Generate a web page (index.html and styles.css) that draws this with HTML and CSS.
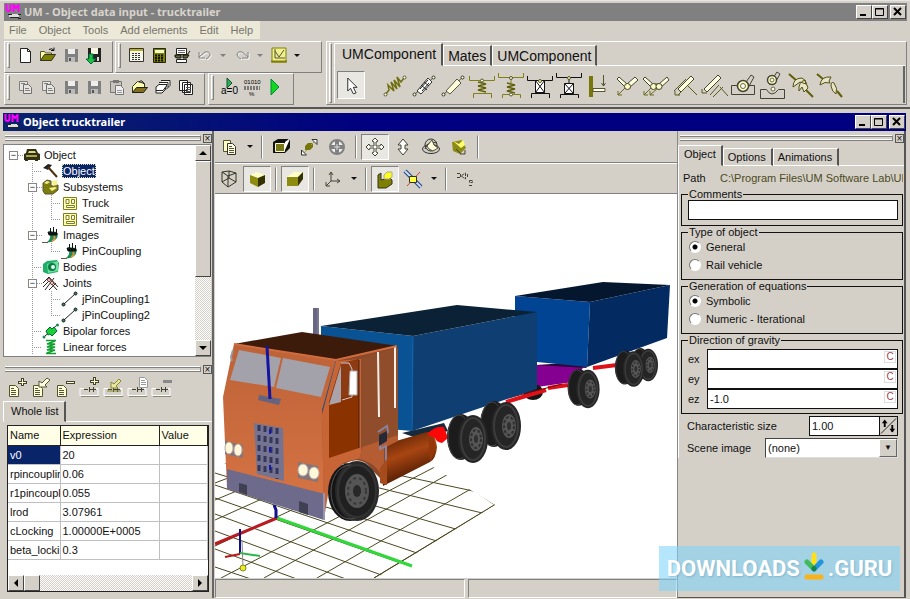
FILE: index.html
```html
<!DOCTYPE html>
<html lang="en">
<head>
<meta charset="utf-8">
<title>UM - Object data input - trucktrailer</title>
<link rel="stylesheet" href="styles.css">
</head>
<body>
<svg class="sprite" aria-hidden="true">
  <symbol id="um" viewBox="0 0 18 16"><path d="M1.500 0v5q0 2 2 2t2-2V0M8.500 8V1l2.500 3 2.500-3v7" fill="none" stroke="#f0f" stroke-width="2"/><path d="M4 11.500h10" stroke="#ddd" stroke-width="3"/><path d="M5 13.500h9M3 10.500h4M13 10.500h3M13 14.500h3" stroke="#222"/></symbol>
  <symbol id="new" viewBox="0 0 20 20"><path d="M5.500 3.500h7l3 3v11h-10z" fill="#fff" stroke="#222"/><path d="M12.500 3.500v3h3" fill="none" stroke="#222"/></symbol>
  <symbol id="open" viewBox="0 0 20 20"><path d="M2.500 15.500v-9h4l1 1.500h6v2" fill="#ffffa8" stroke="#553"/><path d="M2.500 15.500l4-6h11l-4 6z" fill="#808000" stroke="#332"/><path d="M11 4.500q3-2 5 1m0-3v3h-3" fill="none" stroke="#111"/></symbol>
  <symbol id="disk" viewBox="0 0 20 20"><path d="M4 4h13v13H4z" fill="#808080"/><path d="M7 4h7v5H7z" fill="#eee"/><path d="M7 12h7v5H7z" fill="#bbb"/><path d="M8 13h2v3H8z" fill="#555"/></symbol>
  <symbol id="disk2" viewBox="0 0 20 20"><path d="M4 3h13v14H4z" fill="#222"/><path d="M7 3h7v6H7z" fill="#f5f5e0"/><path d="M5 9v5H2l5 5 5-5H9V9z" fill="#20c040" stroke="#064" /><path d="M13 12h2v4h-2z" fill="#ddd"/></symbol>
  <symbol id="form" viewBox="0 0 20 20"><path d="M3.500 3.500h14v13h-14z" fill="#f6f6e8" stroke="#333"/><path d="M4 5h13" stroke="#b8b020" stroke-width="2"/><path d="M6 8.500h9M6 10.500h9M6 12.500h9M6 14.500h9" stroke="#333" stroke-dasharray="2 1"/></symbol>
  <symbol id="calc" viewBox="0 0 20 20"><path d="M4.500 3.500h12v14h-12z" fill="#808000" stroke="#221"/><path d="M6 5h9v3H6z" fill="#efc"/><path d="M6 10.500h9M6 13h9M6 15.500h9" stroke="#110" stroke-width="2" stroke-dasharray="2 1"/></symbol>
  <symbol id="glasses" viewBox="0 0 20 20"><path d="M4.500 3.500h10v6h-10zM4.500 14.500h10v3h-10z" fill="#fff" stroke="#222"/><path d="M6 5.500h7M6 7.500h7" stroke="#666"/><path d="M3 10h6v3H5l-2-1zM11 10h6l-2 3h-4z" fill="#664" stroke="#110"/><path d="M15 10l3-4" stroke="#110"/></symbol>
  <symbol id="undo" viewBox="0 0 20 20"><path d="M4 7v6h6M4 12l6-5q5-1 5 3-1 3-4 4" fill="none" stroke="#fff" transform="translate(1 1)"/><path d="M4 7v6h6M4 12l6-5q5-1 5 3-1 3-4 4" fill="none" stroke="#808080"/></symbol>
  <symbol id="redo" viewBox="0 0 20 20"><path d="M16 7v6h-6M16 12l-6-5q-5-1-5 3 1 3 4 4" fill="none" stroke="#fff" transform="translate(1 1)"/><path d="M16 7v6h-6M16 12l-6-5q-5-1-5 3 1 3 4 4" fill="none" stroke="#808080"/></symbol>
  <symbol id="chart" viewBox="0 0 20 20"><path d="M3 3h14v14H3z" fill="#f0f090" stroke="#808000"/><path d="M6 4v9h10M6 6l4 6 5-7" fill="none" stroke="#553"/><path d="M2 16.500h16" stroke="#808000" stroke-width="2"/></symbol>
  <symbol id="copy" viewBox="0 0 20 20"><path d="M4.500 4.500h8v9h-8z" fill="#e6e4de" stroke="#808080"/><path d="M8.500 7.500h5l3 3v6h-8z" fill="#e6e4de" stroke="#707070"/><path d="M6 6.500h4M10 11.500h4M10 13.500h5" stroke="#808080"/></symbol>
  <symbol id="copyd" viewBox="0 0 20 20"><path d="M4.500 3.500h7v11h-7z" fill="#ffffc8" stroke="#553"/><path d="M8.500 6.500h5l3 3v8h-8z" fill="#ffffe8" stroke="#332"/><path d="M10 9.500h3M10 11.500h5M10 13.500h5M10 15.500h5" stroke="#553"/></symbol>
  <symbol id="paste" viewBox="0 0 20 20"><path d="M3.500 4.500h11v11h-11z" fill="#c8c4bc" stroke="#777"/><path d="M6 3h6v3H6z" fill="#777"/><path d="M8.500 8.500h5l3 3v6h-8z" fill="#eee" stroke="#777"/><path d="M10 13.500h5M10 15.500h5" stroke="#999"/></symbol>
  <symbol id="open2" viewBox="0 0 20 20"><path d="M2.500 15.500v-6l5-5 7 2v4" fill="#ffffb0" stroke="#332"/><path d="M2.500 15.500l4-5h11l-4 5z" fill="#807020" stroke="#221"/><path d="M9 5q3-3 5 2" fill="none" stroke="#111"/></symbol>
  <symbol id="cards" viewBox="0 0 20 20"><path d="M8 3.500h9v5l-2 2M6 5.500h9v5l-2 2" fill="#fff" stroke="#222"/><path d="M3 10l3-2.500h8L12 13l-3 3H3z" fill="#fff" stroke="#222"/><path d="M3 13.500h7l3-4" fill="none" stroke="#222"/></symbol>
  <symbol id="pages" viewBox="0 0 20 20"><path d="M3.500 3.500h8v10h-8zM6.500 5.500h8v10h-8zM8.500 7.500h8v10h-8z" fill="#fff" stroke="#222"/><path d="M10 10.500h5M10 12.500h5M10 14.500h5" stroke="#555"/></symbol>
  <symbol id="a0" viewBox="0 0 20 20"><path d="M8 1l5 5-5 5z" fill="#30b050" stroke="#153"/><text x="2" y="17" font-size="10">a=0</text></symbol>
  <symbol id="bits" viewBox="0 0 20 20"><text x="2" y="7" font-size="6">01010</text><path d="M2 10h16M2 12h16" stroke="#222" stroke-dasharray="2 1"/><text x="7" y="19" font-size="6">%</text></symbol>
  <symbol id="run" viewBox="0 0 20 20"><path d="M6 2l8 8-8 8z" fill="#10d820" stroke="#083"/></symbol>

  <symbol id="cursor" viewBox="0 0 28 28"><path d="M10.500 6.500v14l3-3 3 6 3-1-3-6h4z" fill="#fff" stroke="#222"/></symbol>
  <symbol id="spring" viewBox="0 0 28 28"><path d="M4 24l4-5-1-5 6 6-3-9 6 7-3-9 6 7-3-10 4 5 3-4" fill="none" stroke="#706f10" stroke-width="1.500"/><g fill="#ffd" stroke="#553"><circle cx="4.500" cy="23.500" r="1.500"/><circle cx="23.500" cy="6.500" r="1.500"/></g></symbol>
  <symbol id="damper" viewBox="0 0 28 28"><path d="M4 24L24 6" stroke="#553"/><path d="M7 20L18 7l4 4-11 12z" fill="#fff" stroke="#332"/><path d="M10 18l8-9M11 14l6 5M14 11l5 4M12 20l7-8" stroke="#222"/><g fill="#ffd" stroke="#332"><circle cx="4.500" cy="23.500" r="1.500"/><circle cx="23.500" cy="6.500" r="1.500"/></g></symbol>
  <symbol id="rod" viewBox="0 0 28 28"><path d="M4 24L24 6" stroke="#553"/><path d="M7 20L18 8l4 4-11 11z" fill="#ffffdc" stroke="#554"/><g fill="#ffd" stroke="#332"><circle cx="4.500" cy="23.500" r="1.500"/><circle cx="23.500" cy="6.500" r="1.500"/></g></symbol>
  <symbol id="spr2" viewBox="0 0 28 28"><path d="M1.500 5v4.500h25V5M5.500 27v-4.500h18V27" fill="none" stroke="#807f18"/><path d="M10 11l8 2-8 2 8 2-8 2 8 2" fill="none" stroke="#605f08" stroke-width="1.500"/><circle cx="14" cy="9.500" r="1.500" fill="#ffd" stroke="#553"/></symbol>
  <symbol id="spr3" viewBox="0 0 28 28"><path d="M1.500 2v4.500h25V2M5.500 27v-3.500h18V27M14 7v5" fill="none" stroke="#807f18"/><path d="M10 12l8 2-8 2 8 2-8 2 8 2" fill="none" stroke="#605f08" stroke-width="1.500"/><circle cx="14" cy="7" r="1.500" fill="#ffd" stroke="#553"/><circle cx="14" cy="23.500" r="1.500" fill="#ffd" stroke="#553"/></symbol>
  <symbol id="box2" viewBox="0 0 28 28"><path d="M1.500 5v4.500h25V5M5.500 27v-4.500h18V27" fill="none" stroke="#111"/><path d="M9.500 9.500h9v12h-9zl9 12m0-12l-9 12" fill="#fff" stroke="#111"/><circle cx="14" cy="10" r="1.500" fill="#ffa" stroke="#553"/></symbol>
  <symbol id="box3" viewBox="0 0 28 28"><path d="M1.500 2v4.500h25V2M5.500 27v-3.500h18V27M14 7v5" fill="none" stroke="#111"/><path d="M9.500 12.500h9v10h-9zl9 10m0-10l-9 10" fill="#fff" stroke="#111"/><circle cx="14" cy="7" r="1.500" fill="#ffa" stroke="#553"/></symbol>
  <symbol id="clamp" viewBox="0 0 28 28"><path d="M5 5h4v21H5z" fill="#78770c"/><path d="M9 17.500h12v3H9z" fill="#ffe" stroke="#553"/><path d="M19.500 4v11m-2-3l2 3 2-3" fill="none" stroke="#553"/></symbol>
  <symbol id="vee" viewBox="0 0 28 28"><path d="M14 15L5 24m0-4v4h4" fill="none" stroke="#6b6a20"/><path d="M4 8l2-2 8 7 8-7 3 3-9 8h-3z" fill="#ffffe0" stroke="#443"/><circle cx="14.500" cy="15.500" r="3" fill="#fffcc0" stroke="#443"/></symbol>
  <symbol id="vee2" viewBox="0 0 28 28"><path d="M10 16l-8 8m0-4v4h4M16 17l-8 7m0-4v4h4" fill="none" stroke="#6b6a20"/><path d="M1 8l2-2 8 7h6l8-7 2 3-9 8H10z" fill="#ffffe0" stroke="#443"/><g fill="#fffcc0" stroke="#443"><circle cx="11.500" cy="15.500" r="3"/><circle cx="17" cy="15.500" r="3"/></g></symbol>
  <symbol id="slide" viewBox="0 0 28 28"><path d="M7 18L20 5l3 3L10 21z" fill="#ffffe0" stroke="#443"/><path d="M15 8L3 20m4 4l14-14M4 20v4h5M17 15l9 9" fill="none" stroke="#5a591c"/></symbol>
  <symbol id="slide2" viewBox="0 0 28 28"><path d="M4 18L18 4l3 3L7 21z" fill="#ffffe0" stroke="#443"/><path d="M2 18v4h5M10 24l9-10m-6 12l10-10M20 16l8 9" fill="none" stroke="#5a591c"/></symbol>
  <symbol id="ball" viewBox="0 0 28 28"><path d="M15 14l7-10 3 2-6 11M2.500 14.500h5q3 7 12 0h6v9h-23z" fill="none" stroke="#443"/><circle cx="14" cy="15" r="5.500" fill="#ffffc0" stroke="#443" stroke-width="1.500"/><circle cx="14" cy="15" r="2.500" fill="#fff" stroke="#664"/></symbol>
  <symbol id="ball2" viewBox="0 0 28 28"><path d="M15 7l4-6 3 2-4 7M2.500 18.500h6q5 9 12 0h6v9h-24z" fill="none" stroke="#443"/><circle cx="14" cy="9" r="4.500" fill="#ffffc0" stroke="#443" stroke-width="1.500"/><circle cx="14" cy="9" r="2" fill="#fff" stroke="#664"/><circle cx="15" cy="18" r="2" fill="#ffd" stroke="#664"/></symbol>
  <symbol id="gear" viewBox="0 0 28 28"><path d="M2 3l8 7M18 18l8 8" stroke="#605f08" stroke-width="2"/><path d="M6 16q0-9 9-9 4 2 4 6l-6-2zM12 20q-1-9 6-11l3 8-4 4-2-5z" fill="#e8e6c8" stroke="#554f10"/></symbol>
  <symbol id="gear2" viewBox="0 0 28 28"><path d="M1 3l6 5M21 20l5 6" stroke="#605f08" stroke-width="2"/><path d="M4 14q1-9 11-8l-2 4 1 2q-5-2-10 2zM15 15q0-5 3-3 4 5 2 11-4-2-5-8z" fill="#e8e6c8" stroke="#554f10"/></symbol>

  <symbol id="frame" viewBox="0 0 20 20"><path d="M2 5l5-3h12v9l-5 5H2z" fill="#111"/><path d="M14 5l4-3h1l-5 11z" fill="#fff"/><path d="M4.500 6.500h9v8h-9z" fill="#777718" stroke="#ffd"/></symbol>
  <symbol id="zoomc" viewBox="0 0 20 20"><path d="M6 9l3-3h5v4l-3 3H6z" fill="#77760a"/><path d="M12 8l5-5M8 13l-5 5" stroke="#aaa840"/><path d="M13 2.500h5v5zM2.500 13v5h5z" fill="#fff" stroke="#333"/></symbol>
  <symbol id="target" viewBox="0 0 20 20"><circle cx="10" cy="10" r="7" fill="#eee" stroke="#808080" stroke-width="2"/><path d="M10 4v12M4 10h12" stroke="#808080" stroke-width="4"/><path d="M10 7v6M7 10h6" stroke="#ddd"/></symbol>
  <symbol id="move" viewBox="0 0 20 20"><path d="M10 1l3 3-2 1v4h4l1-2 3 3-3 3-1-2h-4v4l2 1-3 3-3-3 2-1v-4H5l-1 2-3-3 3-3 1 2h4V5L7 4z" fill="#fff" stroke="#443"/></symbol>
  <symbol id="updown" viewBox="0 0 20 20"><path d="M10 2l5 6h-3v4h3l-5 6-5-6h3V8H5z" fill="#fff" stroke="#443"/></symbol>
  <symbol id="rotate" viewBox="0 0 20 20"><g fill="none" stroke="#333"><circle cx="10" cy="8" r="6"/><ellipse cx="10" cy="12" rx="8.500" ry="4.500"/><path d="M4 12q3-9 12-6"/></g><path d="M6 9l5-6 2 5 4 3-5 3-4-2z" fill="#ffd" stroke="#553"/></symbol>
  <symbol id="spin" viewBox="0 0 20 20"><path d="M3 5l10-2 4 8-6 6-7-3z" fill="#8c8b14"/><path d="M4 4l6 3 4-4 2 5-4 3z" fill="#ffff70"/><path d="M7 12l5 5m4-4v4h-5" fill="none" stroke="#443"/></symbol>
  <symbol id="wire" viewBox="0 0 20 20"><path d="M3 3l6 4v11l-6-5zM9 7l8-3v9l-8 5M3 3l7-1 7 2M3 13l7-4 7 4M10 2v7" fill="none" stroke="#332"/></symbol>
  <symbol id="solid" viewBox="0 0 20 20"><path d="M3 6l7-3 8 3-7 3z" fill="#ffffc8"/><path d="M3 6l8 3v9l-8-4z" fill="#8d8c10"/><path d="M11 9l7-3v8l-7 4z" fill="#333202"/></symbol>
  <symbol id="persp" viewBox="0 0 20 20"><path d="M2 8l7-5h9l-6 5z" fill="#ffffc8"/><path d="M2 8h11v9H2z" fill="#8d8c10"/><path d="M13 8l5-5v7l-5 7z" fill="#333202"/></symbol>
  <symbol id="axes" viewBox="0 0 20 20"><path d="M8 12V3m-2 3l2-3 2 3M8 12l9 0m-3-2l3 2-3 2M8 12l-5 5m0-4v4h4" fill="none" stroke="#443"/></symbol>
  <symbol id="ell" viewBox="0 0 20 20"><path d="M3 6l3-2v7l9-2 2 2v4l-6 4H3z" fill="#807f00" stroke="#332"/><path d="M9 6l3-3h5v5l-3 2H9z" fill="#ffff20" stroke="#aa8"/></symbol>
  <symbol id="cross" viewBox="0 0 20 20"><path d="M2 2l16 16" stroke="#248" stroke-width="4"/><path d="M2 2l16 16" stroke="#cde" stroke-width="2"/><path d="M17 3L4 17" stroke="#c44"/><path d="M6.500 7.500h7v6h-7z" fill="#ff4" stroke="#332"/></symbol>
  <symbol id="joint" viewBox="0 0 20 20"><path d="M2 4.500h3.500v4H2M10.500 4v6L6 7zM12.500 5v4M14.500 11.500h3v2h-3zM14 16.500h4" fill="none" stroke="#443" stroke-dasharray="3 1"/></symbol>

  <symbol id="car" viewBox="0 0 18 16"><path d="M4 2h9l2 4 2 1v6h-2v1h-3v-1H5v1H2v-1H1V7l2-1z" fill="#333014"/><path d="M6 4h6l1 2H5z" fill="#d6d484"/><path d="M3 9h11" stroke="#aaa848" stroke-width="2"/></symbol>
  <symbol id="hammer" viewBox="0 0 18 16"><path d="M1 5l5-4 4 1-4 5-2-1z" fill="#222"/><path d="M6 4l9 10" stroke="#4c3010" stroke-width="2"/></symbol>
  <symbol id="subs" viewBox="0 0 18 16"><path d="M1 4l4-3 4 1v5l7-1v5l-5 4H3l-2-3z" fill="#7e7d10" stroke="#553"/><path d="M2 4l3-2 3 1-3 2zM10 2l5-1v5l-4 1zM7 9l6-1 2 1-5 3z" fill="#f7f28a"/></symbol>
  <symbol id="unit" viewBox="0 0 18 16"><path d="M2.500 2.500h13v12h-13z" fill="#ffffb8" stroke="#807f18"/><path d="M5 4.500h3v4H5zM10.500 4.500h3v4h-3zM5.500 10.500h8v2h-8z" fill="#fff" stroke="#807f18"/></symbol>
  <symbol id="paint" viewBox="0 0 18 16"><path d="M7 4l8 1q2 5-2 8-4 3-8 2 4-3 3-7z" fill="#168a50"/><path d="M6 5l9 1v2H7zM8.500 1v4M11.500 0v5M14.500 2v4" fill="#111" stroke="#111"/><path d="M12 9q2 3-2 5" stroke="#d89040" fill="none" stroke-width="2"/><path d="M0 15.500h6" stroke="#654"/></symbol>
  <symbol id="body" viewBox="0 0 18 16"><path d="M1 5l4-3 10-1 2 3-1 9-10 2-5-2z" fill="#1fae66"/><path d="M5 5l11-3v10L6 14z" fill="#6be0a0"/><circle cx="10" cy="8" r="4" fill="#0f7a44"/><circle cx="11" cy="8" r="2" fill="#dfe"/></symbol>
  <symbol id="joints" viewBox="0 0 18 16"><path d="M1 8l6-6 9 10M1 12l6-6 8 9M7 2l-3 3M12 3l-9 12M14 8L7 15" fill="none" stroke="#322" stroke-width="1"/><circle cx="7" cy="5" r="1.500" fill="#fff" stroke="#733"/><circle cx="10" cy="8" r="1.500" fill="#fff" stroke="#733"/></symbol>
  <symbol id="link" viewBox="0 0 18 16"><path d="M3 13L14 3" stroke="#222"/><g fill="#487858" stroke="#122"><circle cx="2.500" cy="13.500" r="1.500"/><circle cx="14.500" cy="2.500" r="1.500"/></g></symbol>
  <symbol id="bip" viewBox="0 0 18 16"><path d="M2 14L15 2" stroke="#222"/><path d="M4 8l4-4 2 2 2-2 3 4-5 5-2-2-2 1z" fill="#18d038" stroke="#063"/><circle cx="2" cy="14" r="1.500" fill="#285"/><circle cx="15.500" cy="2" r="1.500" fill="#285"/></symbol>
  <symbol id="lin" viewBox="0 0 18 16"><path d="M4 1.500h10M4 14.500h10M13 2l-8 3h8l-8 3h8l-8 3h8l-8 3" fill="none" stroke="#10a030" stroke-width="1.500"/></symbol>

  <symbol id="doc" viewBox="0 0 22 22"><path d="M2.500 9.500h6l3 3v8h-9z" fill="#ffffd8" stroke="#553"/><path d="M4 12.500h3M4 14.500h5M4 16.500h5M4 18.500h5" stroke="#553"/></symbol>
  <symbol id="id" viewBox="0 0 22 22"><path d="M1 19.500v-7h4M17 12.500h2v7H1" fill="none" stroke="#fff"/><path d="M2 20.500h18" stroke="#887"/><path d="M5 13.500h4M10.500 11v5M14.500 11v5M11 13.500h6" stroke="#443"/></symbol>
</svg>

<header class="main-window">
  <div class="titlebar">
    <svg class="um"><use href="#um"/></svg><h1>UM - Object data input - trucktrailer</h1>
    <div class="winbtns"><button aria-label="Minimize"><svg viewBox="0 0 14 12"><path d="M3 9h6" stroke="#000" stroke-width="2"/></svg></button><button aria-label="Maximize"><svg viewBox="0 0 14 12"><path d="M2.500 2.500h8v7h-8zM2 3h9" fill="none" stroke="#000"/></svg></button><button class="close" aria-label="Close"><svg viewBox="0 0 14 12"><path d="M3 2l7 7m0-7L3 9" stroke="#000" stroke-width="2"/></svg></button></div>
  </div>
  <nav class="menu"><a href="#">File</a><a href="#">Object</a><a href="#">Tools</a><a href="#">Add elements</a><a href="#">Edit</a><a href="#">Help</a></nav>
  <div class="bars">
    <div class="bar-rows">
      <div class="bar-row">
        <div class="bar"><i class="grip"></i>
          <button aria-label="New"><svg><use href="#new"/></svg></button><button aria-label="Open"><svg><use href="#open"/></svg></button><button aria-label="Save"><svg><use href="#disk"/></svg></button><button aria-label="Save as"><svg><use href="#disk2"/></svg></button></div>
        <div class="bar grow"><i class="grip"></i>
          <button aria-label="Form"><svg><use href="#form"/></svg></button><button aria-label="Calculator"><svg><use href="#calc"/></svg></button><button aria-label="View"><svg><use href="#glasses"/></svg></button><button aria-label="Undo"><svg><use href="#undo"/></svg></button><button class="drop dim" aria-label="Undo list"></button><button aria-label="Redo"><svg><use href="#redo"/></svg></button><button class="drop dim" aria-label="Redo list"></button><button aria-label="Chart"><svg><use href="#chart"/></svg></button><button class="drop" aria-label="Chart list"></button></div>
      </div>
      <div class="bar-row">
        <div class="bar"><i class="grip"></i>
          <button aria-label="Copy"><svg><use href="#copy"/></svg></button><button aria-label="Copy all"><svg><use href="#copy"/></svg></button><button aria-label="Save item"><svg><use href="#disk"/></svg></button><button aria-label="Save items"><svg><use href="#disk"/></svg></button><button aria-label="Paste"><svg><use href="#paste"/></svg></button><button aria-label="Load"><svg><use href="#open2"/></svg></button><button aria-label="Cards"><svg><use href="#cards"/></svg></button><button aria-label="Pages"><svg><use href="#pages"/></svg></button></div>
        <div class="bar"><i class="grip"></i>
          <button aria-label="Set zero"><svg><use href="#a0"/></svg></button><button aria-label="Compile"><svg><use href="#bits"/></svg></button><button aria-label="Run"><svg><use href="#run"/></svg></button></div>
      </div>
    </div>
    <div class="bar components"><i class="grip"></i>
      <div class="tabbed">
        <div class="tabs big"><button class="on">UMComponent</button><button>Mates</button><button>UMComponent</button></div>
        <div class="palette">
          <button class="pressed first" aria-label="Select"><svg><use href="#cursor"/></svg></button><button aria-label="Spring"><svg><use href="#spring"/></svg></button><button aria-label="Damper"><svg><use href="#damper"/></svg></button><button aria-label="Rod"><svg><use href="#rod"/></svg></button><button aria-label="Spring support"><svg><use href="#spr2"/></svg></button><button aria-label="Spring hanger"><svg><use href="#spr3"/></svg></button><button aria-label="Bushing support"><svg><use href="#box2"/></svg></button><button aria-label="Bushing hanger"><svg><use href="#box3"/></svg></button><button aria-label="Clamp"><svg><use href="#clamp"/></svg></button><button aria-label="Rotational joint"><svg><use href="#vee"/></svg></button><button aria-label="Double joint"><svg><use href="#vee2"/></svg></button><button aria-label="Slider"><svg><use href="#slide"/></svg></button><button aria-label="Double slider"><svg><use href="#slide2"/></svg></button><button aria-label="Ball joint"><svg><use href="#ball"/></svg></button><button aria-label="Socket"><svg><use href="#ball2"/></svg></button><button aria-label="Gear"><svg><use href="#gear"/></svg></button><button aria-label="Bevel gear"><svg><use href="#gear2"/></svg></button>
        </div>
      </div>
    </div>
  </div>
</header>

<main class="child-window">
  <div class="titlebar active">
    <svg class="um"><use href="#um"/></svg><h2>Object trucktrailer</h2>
    <div class="winbtns"><button aria-label="Minimize"><svg viewBox="0 0 14 12"><path d="M3 9h6" stroke="#000" stroke-width="2"/></svg></button><button aria-label="Maximize"><svg viewBox="0 0 14 12"><path d="M2.500 2.500h8v7h-8zM2 3h9" fill="none" stroke="#000"/></svg></button><button class="close" aria-label="Close"><svg viewBox="0 0 14 12"><path d="M3 2l7 7m0-7L3 9" stroke="#000" stroke-width="2"/></svg></button></div>
  </div>
  <div class="work">
    <aside class="left">
      <div class="dockgrip"><i></i><button aria-label="Close tree">×</button></div>
      <div class="tree-box">
        <ul class="tree">
          <li><div class="node"><button class="tg" aria-label="Collapse Object">−</button><i class="stub"></i><svg><use href="#car"/></svg><span>Object</span></div>
            <ul>
              <li><div class="node"><i class="leaf"></i><svg><use href="#hammer"/></svg><span class="sel">Object</span></div></li>
              <li><div class="node"><button class="tg" aria-label="Collapse Subsystems">−</button><i class="stub"></i><svg><use href="#subs"/></svg><span>Subsystems</span></div>
                <ul class="end"><li><div class="node"><i class="leaf"></i><svg><use href="#unit"/></svg><span>Truck</span></div></li><li><div class="node"><i class="leaf"></i><svg><use href="#unit"/></svg><span>Semitrailer</span></div></li></ul></li>
              <li><div class="node"><button class="tg" aria-label="Collapse Images">−</button><i class="stub"></i><svg><use href="#paint"/></svg><span>Images</span></div>
                <ul class="end"><li><div class="node"><i class="leaf"></i><svg><use href="#paint"/></svg><span>PinCoupling</span></div></li></ul></li>
              <li><div class="node"><i class="leaf"></i><svg><use href="#body"/></svg><span>Bodies</span></div></li>
              <li><div class="node"><button class="tg" aria-label="Collapse Joints">−</button><i class="stub"></i><svg><use href="#joints"/></svg><span>Joints</span></div>
                <ul class="end"><li><div class="node"><i class="leaf"></i><svg><use href="#link"/></svg><span>jPinCoupling1</span></div></li><li><div class="node"><i class="leaf"></i><svg><use href="#link"/></svg><span>jPinCoupling2</span></div></li></ul></li>
              <li><div class="node"><i class="leaf"></i><svg><use href="#bip"/></svg><span>Bipolar forces</span></div></li>
              <li><div class="node"><i class="leaf"></i><svg><use href="#lin"/></svg><span>Linear forces</span></div></li>
            </ul></li>
        </ul>
        <div class="vscroll"><button class="up" aria-label="Scroll up"></button><div class="thumb"></div><div class="trough"></div><button class="down" aria-label="Scroll down"></button></div>
      </div>
      <div class="dockgrip second"><i></i><button aria-label="Close list">×</button></div>
      <div class="list-tools">
        <button aria-label="Add"><svg viewBox="0 0 22 22"><use href="#doc"/><path d="M15.500 2v8M11 6.500h9" stroke="#443" stroke-width="3"/><path d="M15.500 3v6M12 6.500h7" stroke="#ffc"/></svg></button>
        <button aria-label="Edit"><svg viewBox="0 0 22 22"><use href="#doc"/><path d="M8 11V5l3 2 5-5 3 2-5 5 2 2z" fill="#ffd" stroke="#553"/></svg></button>
        <button aria-label="Delete"><svg viewBox="0 0 22 22"><use href="#doc"/><path d="M11 6.500h9" stroke="#443" stroke-width="3"/><path d="M12 6.500h7" stroke="#ffc"/></svg></button>
        <button aria-label="Add identifier"><svg viewBox="0 0 22 22"><use href="#id"/><path d="M15.500 1v8M11 5.500h9" stroke="#443" stroke-width="3"/><path d="M15.500 2v6M12 5.500h7" stroke="#ffc"/></svg></button>
        <button aria-label="Edit identifier"><svg viewBox="0 0 22 22"><use href="#id"/><path d="M8 12V6l3 2 5-5 2 2-5 5 2 2zM4 15h14" fill="#e8e8a0" stroke="#88872c"/></svg></button>
        <button aria-label="Copy identifier"><svg viewBox="0 0 22 22"><use href="#id"/><path d="M12.500 1.500h5l3 3v7h-8z" fill="#fff" stroke="#999"/><path d="M14 4.500h4M14 6.500h5M14 8.500h5" stroke="#999"/></svg></button>
        <button aria-label="Delete identifier"><svg viewBox="0 0 22 22"><use href="#id"/><path d="M12 5.500h9" stroke="#888" stroke-width="3"/></svg></button>
      </div>
      <div class="tabs list-tab"><button class="on">Whole list</button></div>
      <div class="list-page">
        <table>
          <thead><tr><th>Name</th><th>Expression</th><th>Value</th></tr></thead>
          <tbody>
            <tr><td class="sel">v0</td><td>20</td><td></td></tr>
            <tr><td>rpincoupling</td><td>0.06</td><td></td></tr>
            <tr><td>r1pincoupling</td><td>0.055</td><td></td></tr>
            <tr><td>lrod</td><td>3.07961</td><td></td></tr>
            <tr><td>cLocking</td><td>1.00000E+0005</td><td></td></tr>
            <tr><td>beta_locking</td><td>0.3</td><td></td></tr>
          </tbody>
        </table>
        <div class="hscroll"><button class="lt" aria-label="Scroll left"></button><div class="thumb"></div><div class="trough"></div><button class="rt" aria-label="Scroll right"></button></div>
      </div>
    </aside>

    <section class="center">
      <div class="viewbar"><button aria-label="Copy picture"><svg><use href="#copyd"/></svg></button><button class="drop" aria-label="Copy list"></button><i class="sep"></i><button aria-label="Frame"><svg><use href="#frame"/></svg></button><button aria-label="Fit"><svg><use href="#zoomc"/></svg></button><button aria-label="Center"><svg><use href="#target"/></svg></button><i class="sep"></i><button class="pressed" aria-label="Pan"><svg><use href="#move"/></svg></button><button aria-label="Zoom"><svg><use href="#updown"/></svg></button><button aria-label="Rotate"><svg><use href="#rotate"/></svg></button><button aria-label="Spin"><svg><use href="#spin"/></svg></button><i class="sep"></i></div>
      <div class="viewbar two"><button aria-label="Wireframe"><svg><use href="#wire"/></svg></button><button class="pressed" aria-label="Solid"><svg><use href="#solid"/></svg></button><i class="sep"></i><button class="pressed" aria-label="Perspective"><svg><use href="#persp"/></svg></button><i class="sep"></i><button aria-label="Axes"><svg><use href="#axes"/></svg></button><button class="drop" aria-label="Axes list"></button><i class="sep"></i><button class="pressed" aria-label="Element"><svg><use href="#ell"/></svg></button><button aria-label="Grid"><svg><use href="#cross"/></svg></button><button class="drop" aria-label="Grid list"></button><i class="sep"></i><button aria-label="Joint"><svg><use href="#joint"/></svg></button></div>
      <svg class="scene" viewBox="215 193 462 384" preserveAspectRatio="xMinYMin meet" role="img" aria-label="Truck with trailer">
        <defs>
          <clipPath id="floor"><path d="M215 466l80-30 130 25 70 43-120 74H215z"/></clipPath>
          <linearGradient id="tank" x1="0" y1="0" x2=".4" y2="1"><stop offset="0" stop-color="#401500"/><stop offset=".5" stop-color="#a84512"/><stop offset="1" stop-color="#401500"/></linearGradient>
          <linearGradient id="cabg" x1="0" y1="0" x2="0" y2="1"><stop offset="0" stop-color="#bd6237"/><stop offset="1" stop-color="#d87545"/></linearGradient>
          <g id="wh"><ellipse cx="-7" rx="14" ry="23" fill="#1c1c1c" cy="-2"/><ellipse cx="-9" rx="11" ry="22" cy="-2" fill="none" stroke="#4a4a4a"/><ellipse cx="5" rx="15" ry="24" fill="#252525"/><ellipse cx="5" rx="12" ry="21" fill="none" stroke="#3c3c3c" stroke-width="2"/><ellipse cx="8" rx="7" ry="12" fill="#555"/><ellipse cx="8" rx="5" ry="9" fill="none" stroke="#303030" stroke-dasharray="3 2" stroke-width="2"/><ellipse cx="8" rx="2" ry="4" fill="#303030"/></g>
        </defs>
        <rect x="215" y="193" width="462" height="385" fill="#fff"/>
        <g clip-path="url(#floor)" stroke="#4c4921" fill="none">
          <path d="M215 435L520 500M215 447l300 73M215 459l300 86M215 472l300 92M215 484l300 101M215 497l300 105M215 513l300 110M215 530l300 110M215 548l300 110M215 566l60 20"/>
          <path d="M215 482l130-50M215 499l180-75M215 519l200-90M215 545l230-108M221 577l260-135M264 577l220-124M317 577l190-110M374 577l125-76"/>
          <path d="M437 465l58 39-121 73"/>
        </g>
        <path d="M277 517l135 48" stroke="#32d83a" stroke-width="3"/><path d="M277 517l-62 26" stroke="#b81c20" stroke-width="3"/><path d="M276 517v-8l-2-5" stroke="#10108c" stroke-width="3" fill="none"/>
        <path d="M313 307h6v30h-6z" fill="#686783"/><path d="M318 307v28" stroke="#8886a0"/>
        <path d="M536 364h49l-12 17-36 5z" fill="#850090"/><path d="M536 364l46-3 5 6z" fill="#2b0635"/>
        <ellipse cx="533" cy="391" rx="10" ry="8" fill="#151515"/><path d="M506 401l40-12M548 387l20-3M593 367l24-3" stroke="#dd1219" stroke-width="4"/><path d="M508 397l54-14" stroke="#7b0810"/>
        <path d="M515 295l75 6-3 65-50-5-22-22z" fill="#004493"/><path d="M590 301l80-17-3 53-80 29z" fill="#032b62"/><path d="M515 295l88-14 67 3-80 17z" fill="#05172f"/>
        <use href="#wh" transform="translate(645 364) scale(.65 .68)"/><use href="#wh" transform="translate(630 368) scale(.72 .74)"/><use href="#wh" transform="translate(584 388) scale(.78 .8)"/>
        <path d="M321 325l92 10-1 95-91-8z" fill="#095294"/><path d="M413 335l124-24v77l-125 42z" fill="#0e3e72"/><path d="M321 325l136-21 80 7-124 24z" fill="#0b2236"/><path d="M413 335l-1 94" stroke="#0d62ac"/>
        <path d="M402 432l42-10 4 8-28 8z" fill="#152b3c"/>
        <path d="M379 445l48-14q8 0 10 15-1 12-7 15l-47 24z" fill="url(#tank)"/><path d="M428 432q13 9 2 28" fill="#94370d"/><path d="M427 433q9-9 17-7l4 11-6 5q-6-1-7-5z" fill="#fa0808"/>
        <use href="#wh" transform="translate(501 425)"/><use href="#wh" transform="translate(468 438)"/>
        <path d="M337 359l60-14 1 92-13 8 1 38-13-13q-10-16-27-8-15 5-19 28l-4 28-2-103z" fill="#8c4a2a"/>
        <path d="M336 360l-14 54 2 104 5-30q5-24 20-28l12-3V358z" fill="#c76537"/>
        <path d="M361 357l37-10v87l-37 13z" fill="#8f4d2c"/><path d="M362 446l36-12v6l-14 7v32q-8-18-25-21z" fill="#b65c32"/>
        <path d="M341 362l18-4v89l-30 10v-56z" fill="#8a3200"/><path d="M341 364l-12 40 12-3z" fill="#aaa4aa"/><path d="M341 362l18-3v33l-18 5z" fill="#8c3b12"/><path d="M359 359v88" stroke="#452312"/>
        <path d="M378 351l1 65M395 346v61" stroke="#f8eee8" stroke-width="2"/><path d="M341 362h8l3 6v28l-10 3" fill="none" stroke="#d5c9cc"/><path d="M350 370h7v24h-8z" fill="#fff" stroke="#aaa"/>
        <path d="M234 343l102 16-14 50 2 109-97-30-4-92z" fill="url(#cabg)"/><path d="M234 343l68-12 96 14-62 14z" fill="#3d1b0b"/><path d="M234 343l102 16 61-14" fill="none" stroke="#d16c3e" stroke-width="2"/>
        <path d="M239 349l42 8-7 29-44-7zM283 357l47 9-9 30-45-9z" fill="#a3a2ab"/><path d="M233 349l-2 7 1 4" stroke="#999" fill="none" stroke-width="2"/>
        <path d="M259 394l22 4-2 6-21-5z" fill="#66637f"/><path d="M267 345l3 53" stroke="#1414a0" stroke-width="3"/>
        <path d="M254 422l29 5 1 53-27-7z" fill="#747392"/><path d="M259 424v47M265 425v48M271 426v50M277 427v51" stroke="#353757" stroke-width="3" stroke-dasharray="6 4"/><path d="M270 428v45" stroke="#1717b5" stroke-dasharray="5 13" stroke-width="2"/>
        <path d="M225 440l18 4v13l-18-4zM298 461l20 4v16l-20-4z" fill="#857578"/><g fill="#fff8d8" stroke="#b8aeb0"><ellipse cx="229" cy="447" rx="4" ry="6"/><ellipse cx="238" cy="449" rx="4" ry="6"/><ellipse cx="303" cy="469" rx="5" ry="6"/><ellipse cx="314" cy="472" rx="5" ry="6"/></g>
        <path d="M227 468l98 25-1 26-97-31z" fill="#6d6a8c"/><path d="M239 482l8 2v10l-8-3zM299 500l9 3v11l-9-3z" fill="#3f4051"/><path d="M324 492v27" stroke="#9795b2" stroke-width="2"/>
        <path d="M378 431l9-6 1 6-8 5v12l6-3v17" fill="none" stroke="#8884a0" stroke-width="2"/><path d="M379 434l8-4v10l-8 5z" fill="#242a38"/><path d="M380 467v15l7 2v-26z" fill="#a54b1c"/>
        <ellipse cx="350" cy="491" rx="22" ry="29" fill="#151515"/><ellipse cx="357" cy="490" rx="22" ry="30" fill="#292929"/><ellipse cx="350" cy="491" rx="19" ry="27" fill="none" stroke="#555"/><ellipse cx="357" cy="490" rx="19" ry="26" fill="#202020" stroke="#333" stroke-width="2"/><ellipse cx="357" cy="490" rx="12" ry="17" fill="#555"/><ellipse cx="357" cy="490" rx="9" ry="13" fill="none" stroke="#383838" stroke-width="2" stroke-dasharray="3 3"/><ellipse cx="357" cy="490" rx="4" ry="6" fill="#282828"/>
        <path d="M240 553v-25" stroke="#101080" stroke-width="2"/><path d="M240 553l-15 3" stroke="#b81818" stroke-width="2"/><path d="M240 552l20 3" stroke="#28b848" stroke-width="2"/><path d="M242 540l1 26" stroke="#888"/><circle cx="243" cy="567" r="3" fill="#e8ec20" stroke="#888820"/>
      </svg>
      <footer class="status"><span></span><span></span></footer>
    </section>

    <aside class="right">
      <div class="dockgrip"><i></i><button aria-label="Close properties">×</button></div>
      <div class="tabs"><button class="on">Object</button><button>Options</button><button>Animations</button></div>
      <form class="props">
        <div class="path"><span>Path</span><output>C:\Program Files\UM Software Lab\UM</output></div>
        <fieldset><legend>Comments</legend><input class="box" type="text" aria-label="Comments"></fieldset>
        <fieldset><legend>Type of object</legend><label class="radio"><input type="radio" name="type" checked>General</label><label class="radio"><input type="radio" name="type">Rail vehicle</label></fieldset>
        <fieldset><legend>Generation of equations</legend><label class="radio"><input type="radio" name="eq" checked>Symbolic</label><label class="radio"><input type="radio" name="eq">Numeric - Iterational</label></fieldset>
        <fieldset class="gravity"><legend>Direction of gravity</legend>
          <div class="g"><label for="ex">ex</label><div class="box"><input id="ex" type="text"><button type="button">C</button></div></div>
          <div class="g"><label for="ey">ey</label><div class="box"><input id="ey" type="text"><button type="button">C</button></div></div>
          <div class="g"><label for="ez">ez</label><div class="box"><input id="ez" type="text" value="-1.0"><button type="button">C</button></div></div>
        </fieldset>
        <div class="line"><label for="cs">Characteristic size</label><div class="box spinbox"><input id="cs" type="text" value="1.00"><button type="button" aria-label="Change size"><svg viewBox="0 0 18 18"><path d="M1 17L17 1" stroke="#222"/><path d="M5 10V4M13 8v7" stroke="#000" stroke-width="2"/><path d="M2 6l3-4 3 4zM10 12l3 4 3-4z"/></svg></button></div></div>
        <div class="line"><label for="si">Scene image</label><div class="combo"><select id="si"><option>(none)</option></select></div></div>
      </form>
    </aside>
  </div>
</main>
<div class="watermark"><span>DOWNLOADS</span><svg viewBox="0 0 20 28"><path d="M10 3v13" stroke="#ffe11b" stroke-width="5" stroke-linecap="round"/><path d="M3 10l7 7" stroke="#3fbb5b" stroke-width="5" stroke-linecap="round"/><path d="M17 10l-7 7" stroke="#2196dc" stroke-width="5" stroke-linecap="round"/><circle cx="10" cy="16.500" r="2.500" fill="#168447"/><path d="M3 25h14" stroke="#fbb216" stroke-width="5" stroke-linecap="round"/></svg><span>.GURU</span></div>
</body>
</html>
```

FILE: styles.css
```css
* { box-sizing: border-box; }
body {
  margin: 0;
  min-height: 100vh;
  display: flex;
  flex-direction: column;
  position: relative;
  background: #d4d0c8;
  color: #111;
  font: 11px/14px "Liberation Sans", sans-serif;
}
button, input, select { font: inherit; color: inherit; margin: 0; padding: 0; border: 0; background: none; }
button { display: flex; align-items: center; justify-content: center; flex: none; }
ul { list-style: none; margin: 0; padding: 0; }
.sprite { display: none; }

/* windows */
.main-window { padding: 2px 3px 2px 4px; border-top: 1px solid #e8e6e0; border-bottom: 2px solid #555; }
.child-window { flex: 1; display: flex; flex-direction: column; padding: 4px 4px 2px 3px; border-bottom: 1px solid #777; }
.titlebar { display: flex; align-items: center; height: 18px; background: #808080; color: #d8d4cc; }
.titlebar.active { background: linear-gradient(90deg, #0a246a, #000080 40%); color: #fff; }
.titlebar h1, .titlebar h2 { flex: 1; margin: 0; font: bold 11px/18px "Noto Sans", sans-serif; }
.um { width: 18px; height: 16px; margin: 0 1px; }
.winbtns { display: flex; padding-right: 1px; }
.winbtns button { width: 16px; height: 14px; background: #d4d0c8; border: 1px solid; border-color: #fff #444 #444 #fff; }
.winbtns .close { margin-left: 2px; }
.winbtns svg { width: 14px; height: 12px; }

.menu { display: flex; width: max-content; background: #ece9d8; padding: 0 7px 0 5px; gap: 12px; margin-bottom: 2px; }
.menu a { font-size: 11px; line-height: 18px; color: #77756c; text-decoration: none; }

/* toolbars */
.bars { display: flex; gap: 4px; }
.bar-rows { display: flex; flex-direction: column; width: 318px; }
.bar-row { display: flex; gap: 2px; }
.bar { display: flex; align-items: center; height: 32px; padding: 0 7px 4px 0; border: 1px solid; border-color: #fff #808080 #808080 #fff; }
.bar.grow { flex: 1; }
.bar-row + .bar-row { gap: 3px; }
.grip { align-self: stretch; width: 3px; margin: 1px 3px 0 2px; border: 1px solid; border-color: #fff #808080 #808080 #fff; }
.bar-row button { width: 23px; height: 24px; }
.bar-row svg { width: 20px; height: 20px; font-family: "Liberation Sans", sans-serif; }
.bar-row .drop, .viewbar .drop { width: 14px; }
.drop::after { content: ""; border: 3px solid transparent; border-top-color: #111; border-bottom: 0; }
.drop.dim::after { border-top-color: #808080; }
.components { flex: 1; height: 64px; padding: 0 1px 1px 0; align-items: stretch; }
.components .grip { margin-right: 2px; }
.tabbed { flex: 1; display: flex; flex-direction: column; padding-top: 1px; }
.palette { flex: 1; display: flex; align-items: center; gap: 1px; padding-left: 2px; border-left: 1px solid #fff; border-right: 2px solid #666; }
.palette button, .palette svg { width: 28px; height: 28px; }
.palette .first { margin-right: 15px; }
.pressed { background: #e9e7e2; border: 1px solid; border-color: #808080 #fff #fff #808080; }

/* tabs */
.tabs { display: flex; align-items: flex-end; }
.tabs::after { content: ""; flex: 1; border-bottom: 1px solid #fff; }
.tabs button { height: 18px; padding: 0 5px 0 4px; border: 1px solid #fff; border-right: 2px solid #555; }
.tabs button.on { height: 21px; border-bottom-color: transparent; padding: 0 5px 3px 5px; }
.tabs.big button { height: 21px; padding: 0 4px; font-size: 14px; }
.tabs.big button.on { height: 23px; padding: 0 5px 2px 7px; }

/* work area */
.work { flex: 1; display: grid; grid-template-columns: 211px minmax(0, 1fr) 229px; }
.left { display: flex; flex-direction: column; border-right: 2px solid #666; min-width: 0; padding-bottom: 2px; }
.dockgrip { display: flex; align-items: center; height: 12px; margin-top: 1px; padding-left: 2px; }
.dockgrip i { flex: 1; height: 6px; border: 1px solid #808080; border-left: 0; border-top-color: #fff; box-shadow: inset 0 1px #808080, inset 0 -1px #fff; }
.dockgrip button { width: 9px; height: 9px; margin: 0 0 0 2px; border: 1px solid #555; font-size: 10px; line-height: 7px; }
.second { margin-top: 5px; height: 14px; }
.tree-box { display: flex; height: 213px; margin-right: 1px; overflow: hidden; background: #fff; border: 1px solid #808080; border-right: 0; }
.tree { flex: 1; padding: 2px 0 0 5px; }
.tree ul { padding-left: 19px; background: repeating-linear-gradient(#999 0 1px, #fff 1px 2px) 23px 0 / 1px 100% no-repeat; }
.tree ul.end { background-size: 1px calc(100% - 8px); }
.node { display: flex; align-items: center; height: 16px; white-space: nowrap; }
.node svg { width: 18px; height: 16px; margin-right: 2px; }
.node span { padding: 0 1px; }
.tree .sel { background: #0a246a; color: #fff; outline: 1px dotted #dda; outline-offset: -1px; }
.tg { width: 9px; height: 9px; background: #fff; border: 1px solid #888; line-height: 7px; font-size: 9px; }
.stub, .leaf { height: 1px; background: repeating-linear-gradient(90deg, #999 0 1px, #fff 1px 2px); }
.stub { width: 5px; }
.leaf { width: 10px; margin-left: 4px; }

.vscroll { width: 16px; display: flex; flex-direction: column; }
.hscroll { height: 16px; display: flex; margin-top: auto; }
.trough { flex: 1; background: repeating-conic-gradient(#fff 0 25%, #d4d0c8 0 50%) 0 0 / 2px 2px; }
.thumb, .vscroll button, .hscroll button { width: 16px; height: 16px; background: #d4d0c8; border: 1px solid; border-color: #fff #444 #444 #fff; }
.vscroll .thumb { height: 116px; }
.up::after, .down::after, .lt::after, .rt::after { content: ""; border: 4px solid transparent; }
.up::after { border-bottom-color: #000; border-top: 0; }
.down::after { border-top-color: #000; border-bottom: 0; }
.lt::after { border-right-color: #000; border-left: 0; }
.rt::after { border-left-color: #000; border-right: 0; }

.list-tools { display: flex; gap: 2px; padding: 0 4px; }
.list-tools button, .list-tools svg { width: 22px; height: 22px; }
.list-tab { margin-top: 3px; }
.list-tab button.on { padding: 0 5px 2px 7px; }
.list-page { flex: 1; display: flex; flex-direction: column; margin: 3px 3px 4px 4px; border: 1px solid #222; background: #fff; }
table { width: 100%; table-layout: fixed; border-collapse: collapse; }
th, td { height: 19px; padding: 0 2px; text-align: left; font-weight: normal; white-space: nowrap; overflow: hidden; border-right: 1px solid #c0c0c0; border-bottom: 1px solid #c0c0c0; }
th { background: #ffffe8; border-color: #222; }
th:first-child { width: 52px; }
th:nth-child(2) { width: 99px; }
td.sel { background: #0a246a; color: #fff; }

/* viewer */
.center { display: flex; flex-direction: column; min-width: 0; padding-left: 1px; }
.viewbar { display: flex; align-items: center; height: 32px; border-bottom: 1px solid #808080; }
.viewbar.two { height: 31px; border-top: 1px solid #fff; }
.viewbar button { width: 28px; height: 26px; }
.viewbar svg { width: 20px; height: 20px; }
.sep { width: 2px; height: 24px; margin: 0 4px; border: 1px solid; border-color: transparent #fff transparent #808080; }
.scene { display: block; flex: 1; width: 100%; height: 0; min-height: 384px; background: #fff; }
.status { display: grid; grid-template-columns: 250px 1fr; gap: 3px; height: 20px; padding-top: 1px; }
.status span { border: 1px solid; border-color: #808080 #fff #fff #808080; }

/* properties */
.right { border-left: 1px solid #888; border-right: 2px solid #555; border-bottom: 1px solid #555; min-width: 0; }
.right .tabs { margin-top: 1px; }
.props { padding: 5px 1px 0 2px; border-left: 1px solid #fff; }
.path { display: grid; grid-template-columns: 37px minmax(0, 1fr); height: 17px; padding-left: 2px; white-space: nowrap; overflow: hidden; }
.path output { color: #4b4a1c; overflow: hidden; }
fieldset { min-width: 0; margin: 0; padding: 0 4px 5px 6px; border: 1px solid #111; }
legend { padding: 0 1px; line-height: 12px; }
.box { display: flex; width: 100%; height: 20px; background: #fff; border: 1px solid #111; }
.box input { flex: 1; min-width: 0; padding: 0 2px; }
.radio { display: flex; align-items: center; gap: 5px; height: 18px; }
.radio input { appearance: none; width: 12px; height: 12px; margin-left: 1px; border-radius: 50%; border: 1px solid; border-color: #777 #fff #fff #777; background: #fff; }
.radio input:checked { background: radial-gradient(circle, #000 2px, #fff 3px); }
.gravity { padding-top: 3px; padding-bottom: 4px; }
.g { display: grid; grid-template-columns: 19px minmax(0, 1fr); align-items: center; }
.g .box button { width: 12px; height: 12px; margin-top: 1px; margin-right: 1px; border: 1px solid #ddd; color: #a04050; font-size: 10px; }
.line { display: flex; justify-content: space-between; align-items: center; margin-top: 2px; padding: 0 5px 0 6px; height: 20px; }
.spinbox { width: 89px; }
.spinbox button { width: 18px; height: 18px; background: #d4d0c8; border-left: 1px solid #111; }
.spinbox svg { width: 18px; height: 18px; }
.combo { display: flex; width: 133px; height: 20px; background: #fff; border: 1px solid; border-color: #444 #ddd #ddd #444; }
.combo select { appearance: none; flex: 1; padding-left: 2px; background: #fff; }
.combo::after { content: "▼"; width: 16px; background: #d4d0c8; border: 1px solid; border-color: #fff #666 #666 #fff; font-size: 8px; line-height: 16px; text-align: center; }

.watermark { position: absolute; right: 10px; bottom: 10px; width: 241px; height: 45px; display: flex; align-items: center; justify-content: center; gap: 4px; background: rgba(128, 212, 248, .58); color: #fff; font: bold 22px/45px Roboto, sans-serif; text-shadow: 1px 1px 2px rgba(80, 140, 170, .4); }
.watermark svg { flex: none; width: 20px; height: 28px; margin-bottom: 5px; }
```
